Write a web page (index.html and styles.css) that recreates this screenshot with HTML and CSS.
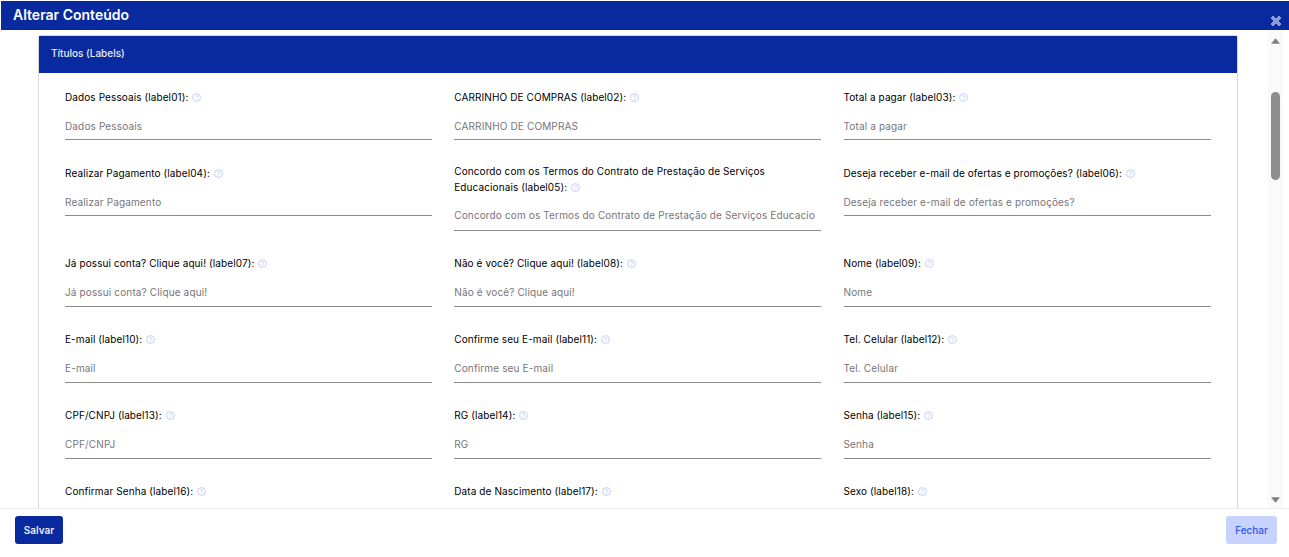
FILE: index.html
```html
<!DOCTYPE html>
<html lang="pt">
<head>
<meta charset="utf-8">
<title>Alterar Conteúdo</title>
<link rel="stylesheet" href="styles.css">
</head>
<body>
<svg class="defs" width="0" height="0" aria-hidden="true">
  <symbol id="help" viewBox="0 0 10 10">
    <circle cx="5" cy="5" r="4.4" fill="none" stroke="currentColor" stroke-width=".9"/>
    <path d="M3.6 4a1.4 1.4 0 1 1 2.2 1.1c-.5.4-.8.6-.8 1.2" fill="none" stroke="currentColor" stroke-width=".9"/>
    <circle cx="5" cy="7.6" r=".5" fill="currentColor"/>
  </symbol>
</svg>
<div class="modal">
  <header class="modal-head">
    <h1 class="modal-title">Alterar Conteúdo</h1>
    <svg class="close" viewBox="0 0 12 12" aria-hidden="true"><path d="M3 1 6 4l3-3 2 2-3 3 3 3-2 2-3-3-3 3-2-2 3-3-3-3z" fill="currentColor" stroke="currentColor" stroke-linejoin="round" stroke-width="1"/></svg>
  </header>
  <div class="modal-body">
    <div class="scroller">
      <section class="panel">
        <div class="panel-head">Títulos (Labels)</div>
        <div class="grid">
          <div class="field"><label class="lbl">Dados Pessoais (label01): <svg class="help"><use href="#help"/></svg></label><div class="input">Dados Pessoais</div></div>
          <div class="field"><label class="lbl">CARRINHO DE COMPRAS (label02): <svg class="help"><use href="#help"/></svg></label><div class="input">CARRINHO DE COMPRAS</div></div>
          <div class="field"><label class="lbl">Total a pagar (label03): <svg class="help"><use href="#help"/></svg></label><div class="input">Total a pagar</div></div>

          <div class="field"><label class="lbl">Realizar Pagamento (label04): <svg class="help"><use href="#help"/></svg></label><div class="input">Realizar Pagamento</div></div>
          <div class="field"><label class="lbl lbl-wrap">Concordo com os Termos do Contrato de Prestação de Serviços Educacionais (label05): <svg class="help"><use href="#help"/></svg></label><div class="input">Concordo com os Termos do Contrato de Prestação de Serviços Educacio</div></div>
          <div class="field"><label class="lbl">Deseja receber e-mail de ofertas e promoções? (label06): <svg class="help"><use href="#help"/></svg></label><div class="input">Deseja receber e-mail de ofertas e promoções?</div></div>

          <div class="field"><label class="lbl">Já possui conta? Clique aqui! (label07): <svg class="help"><use href="#help"/></svg></label><div class="input">Já possui conta? Clique aqui!</div></div>
          <div class="field"><label class="lbl">Não é você? Clique aqui! (label08): <svg class="help"><use href="#help"/></svg></label><div class="input">Não é você? Clique aqui!</div></div>
          <div class="field"><label class="lbl">Nome (label09): <svg class="help"><use href="#help"/></svg></label><div class="input">Nome</div></div>

          <div class="field"><label class="lbl">E-mail (label10): <svg class="help"><use href="#help"/></svg></label><div class="input">E-mail</div></div>
          <div class="field"><label class="lbl">Confirme seu E-mail (label11): <svg class="help"><use href="#help"/></svg></label><div class="input">Confirme seu E-mail</div></div>
          <div class="field"><label class="lbl">Tel. Celular (label12): <svg class="help"><use href="#help"/></svg></label><div class="input">Tel. Celular</div></div>

          <div class="field"><label class="lbl">CPF/CNPJ (label13): <svg class="help"><use href="#help"/></svg></label><div class="input">CPF/CNPJ</div></div>
          <div class="field"><label class="lbl">RG (label14): <svg class="help"><use href="#help"/></svg></label><div class="input">RG</div></div>
          <div class="field"><label class="lbl">Senha (label15): <svg class="help"><use href="#help"/></svg></label><div class="input">Senha</div></div>

          <div class="field"><label class="lbl">Confirmar Senha (label16): <svg class="help"><use href="#help"/></svg></label><div class="input"></div></div>
          <div class="field"><label class="lbl">Data de Nascimento (label17): <svg class="help"><use href="#help"/></svg></label><div class="input"></div></div>
          <div class="field"><label class="lbl">Sexo (label18): <svg class="help"><use href="#help"/></svg></label><div class="input"></div></div>
        </div>
      </section>
    </div>
    <div class="scrollbar">
      <svg class="arrow" viewBox="0 0 10 6" aria-hidden="true"><path d="M5 0 10 6H0z" fill="currentColor"/></svg>
      <div class="track"><div class="thumb"></div></div>
      <svg class="arrow" viewBox="0 0 10 6" aria-hidden="true"><path d="M0 0H10L5 6z" fill="currentColor"/></svg>
    </div>
  </div>
  <footer class="modal-foot">
    <button class="btn btn-save" type="button">Salvar</button>
    <button class="btn btn-close" type="button">Fechar</button>
  </footer>
</div>
</body>
</html>
```
FILE: styles.css
```css
* { box-sizing: border-box; }
html, body { margin: 0; height: 100%; background: #fff; overflow: hidden; }
body { font-family: Inter, "Noto Sans", "Liberation Sans", sans-serif; color: #111; }
.defs { display: block; height: 0; }
.modal { height: 557px; padding: 1px 0 0 1px; display: flex; flex-direction: column; }
.modal-head { height: 29px; flex: none; background: #092a9e; display: flex; justify-content: space-between; padding: 0 7px 0 12px; color: #fff; }
.modal-title { margin: 0; font-size: 14px; font-weight: 600; line-height: 27px; }
.close { width: 12px; height: 12px; margin-top: 14px; color: #8d9bd4; }
.modal-body { height: 479px; flex: none; display: flex; overflow: hidden; border-bottom: 1px solid #eee; }
.scroller { flex: none; width: 1267px; padding: 5px 30px 0 37px; overflow: hidden; }
.panel { width: 1200px; border: 1px solid #d9d9d9; border-radius: 3px 3px 0 0; }
.panel-head { height: 37px; background: #092a9e; color: #e9ecf8; font-size: 10px; font-weight: 500; line-height: 34px; padding-left: 12px; }
.grid { display: grid; grid-template-columns: 367px 367px 367.5px; column-gap: 22.25px; padding: 14px 0 0 26px; align-items: start; }
.field { margin-bottom: 22.6px; }
.lbl { display: block; font-size: 10px; font-weight: 400; letter-spacing: .1px; line-height: 20px; color: #000; }
.lbl-wrap { line-height: 16px; margin-bottom: 1px; }
.help { width: 9px; height: 9px; margin-left: 1px; vertical-align: -1px; color: #b9c3f0; }
.input { height: 33.4px; border-bottom: 1px solid #8c8c8c; font-size: 10px; letter-spacing: .14px; line-height: 38px; color: #77757a; white-space: nowrap; overflow: hidden; }
.lbl-wrap + .input { height: 34.8px; }
.scrollbar { flex: none; width: 15px; background: #fafafa; display: flex; flex-direction: column; align-items: center; padding: 8px 0 5px; color: #808080; }
.arrow { width: 9px; height: 6px; flex: none; }
.track { flex: 1; width: 100%; padding: 48px 3px 0; }
.thumb { height: 88px; background: #8e8e8e; border-radius: 5px; }
.modal-foot { flex: 1; display: flex; justify-content: space-between; padding: 7px 12px 0 14px; }
.btn { height: 28px; border: 0; border-radius: 3px; font: 500 10px Inter, "Noto Sans", sans-serif; }
.btn-save { width: 48px; background: #092a9e; color: #e9ecf8; font-weight: 600; }
.btn-close { width: 51px; background: #c7d2ff; color: #3256e6; }
```
